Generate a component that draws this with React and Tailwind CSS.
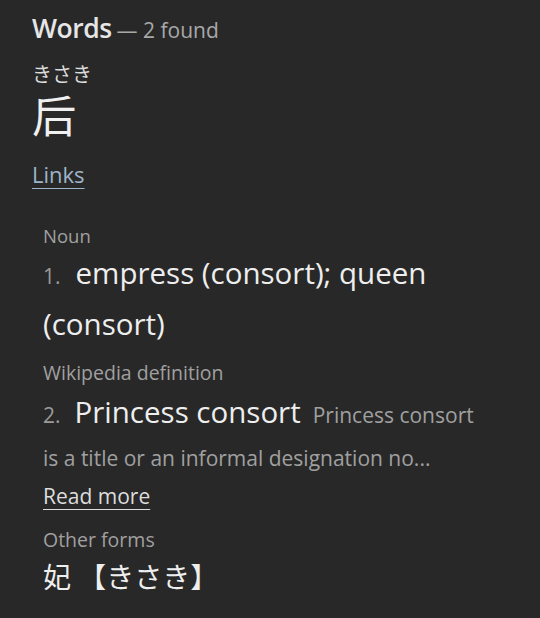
export default function App() {
  const font = { fontFamily: '"Open Sans", "Noto Sans CJK JP", sans-serif' };
  return (
    <div className="w-[540px] h-[618px] bg-[#282828] overflow-hidden text-[#e8e8e8]" style={font}>
      <div className="pl-[32px] pr-[52px] pt-[10px]">
        <h2 className="flex items-baseline leading-[36px]">
          <span className="text-[26.5px] font-semibold text-[#e6e6e6] tracking-[-0.5px]">Words</span>
          <span className="text-[21px] text-[#a8a8a8] ml-[5px]">— 2 found</span>
        </h2>
        <div className="mt-[14px] text-[20px] leading-[26px] text-[#dcdcdc]">きさき</div>
        <div className="text-[44px] leading-[52px] text-[#f0f0f0] mt-[2px]">后</div>
        <a className="block mt-[18px] text-[22px] leading-[28px] text-[#9db4c8] underline underline-offset-[5px] decoration-[1px] w-fit">Links</a>
        <div className="pl-[11px] mt-[36px]">
          <div className="text-[18.5px] leading-[24px] text-[#a0a0a0]">Noun</div>
          <div className="mt-[1px] text-[29.5px] leading-[47px] text-[#eeeeee]">
            <span className="text-[21px] text-[#9a9a9a] mr-[15px]">1.</span>
            empress (consort); queen (consort)
          </div>
          <div className="mt-[14px] text-[19.5px] leading-[24px] text-[#a0a0a0]">Wikipedia definition</div>
          <div className="mt-[7px] text-[29.5px] leading-[40px] text-[#eeeeee]">
            <span className="text-[21px] text-[#9a9a9a] mr-[14px]">2.</span>
            Princess consort
            <span className="text-[21px] text-[#a0a0a0] ml-[12px]">Princess consort is a title or an informal designation no...</span>
          </div>
          <a className="block mt-[4px] text-[21px] leading-[28px] text-[#dddddd] underline underline-offset-[5px] decoration-[1px] w-fit">Read more</a>
          <div className="mt-[18px] text-[19.5px] leading-[24px] text-[#a0a0a0]">Other forms</div>
          <div className="mt-[8px] text-[28px] leading-[34px] text-[#eeeeee]">妃 【きさき】</div>
        </div>
      </div>
    </div>
  );
}
